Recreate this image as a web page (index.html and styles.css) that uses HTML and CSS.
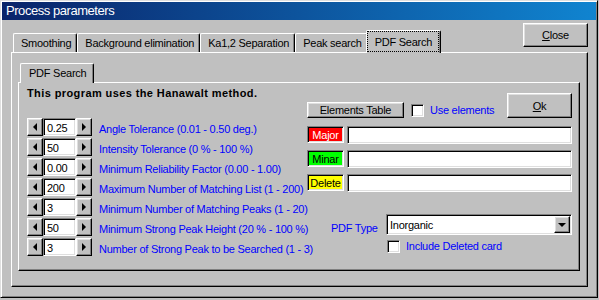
FILE: index.html
```html
<!DOCTYPE html>
<html lang="en">
<head>
    <meta charset="UTF-8">
    <title>Process parameters</title>
    <link rel="stylesheet" href="styles.css">
</head>
<body>
<div class="window">
    <div class="titlebar">Process parameters</div>

    <div class="top-row">
        <div class="tabs">
            <div class="tab">Smoothing</div>
            <div class="tab">Background elimination</div>
            <div class="tab">Ka1,2 Separation</div>
            <div class="tab">Peak search</div>
            <div class="tab selected focus">PDF Search</div>
        </div>
        <div class="btn close-btn"><span><u>C</u>lose</span></div>
    </div>

    <div class="panel outer">
        <div class="tabs inner-tabs">
            <div class="tab tab-inner">PDF Search</div>
        </div>
        <div class="panel inner">
            <div class="left-col">
                <div class="heading">This program uses the Hanawalt method.</div>
                <div class="param">
                    <div class="spin"><span class="btn spin-btn prev"></span><span class="sunken spin-val">0.25</span><span class="btn spin-btn next"></span></div>
                    <span class="param-label">Angle Tolerance (0.01 - 0.50 deg.)</span>
                </div>
                <div class="param">
                    <div class="spin"><span class="btn spin-btn prev"></span><span class="sunken spin-val">50</span><span class="btn spin-btn next"></span></div>
                    <span class="param-label">Intensity Tolerance (0 % - 100 %)</span>
                </div>
                <div class="param">
                    <div class="spin"><span class="btn spin-btn prev"></span><span class="sunken spin-val">0.00</span><span class="btn spin-btn next"></span></div>
                    <span class="param-label">Minimum Reliability Factor (0.00 - 1.00)</span>
                </div>
                <div class="param">
                    <div class="spin"><span class="btn spin-btn prev"></span><span class="sunken spin-val">200</span><span class="btn spin-btn next"></span></div>
                    <span class="param-label">Maximum Number of Matching List (1 - 200)</span>
                </div>
                <div class="param">
                    <div class="spin"><span class="btn spin-btn prev"></span><span class="sunken spin-val">3</span><span class="btn spin-btn next"></span></div>
                    <span class="param-label">Minimum Number of Matching Peaks (1 - 20)</span>
                </div>
                <div class="param">
                    <div class="spin"><span class="btn spin-btn prev"></span><span class="sunken spin-val">50</span><span class="btn spin-btn next"></span></div>
                    <span class="param-label">Minimum Strong Peak Height (20 % - 100 %)</span>
                </div>
                <div class="param">
                    <div class="spin"><span class="btn spin-btn prev"></span><span class="sunken spin-val">3</span><span class="btn spin-btn next"></span></div>
                    <span class="param-label">Number of Strong Peak to be Searched (1 - 3)</span>
                </div>
            </div>

            <div class="right-col">
                <div class="el-row">
                    <div class="btn el-btn">Elements Table</div>
                    <div class="checkbox">
                        <span class="sunken check"></span>
                        <span class="check-label">Use elements</span>
                    </div>
                    <div class="btn ok-btn"><span><u>O</u>k</span></div>
                </div>
                <div class="tag-row first">
                    <span class="sunken tag major">Major</span>
                    <span class="sunken field"></span>
                </div>
                <div class="tag-row">
                    <span class="sunken tag minor">Minar</span>
                    <span class="sunken field"></span>
                </div>
                <div class="tag-row">
                    <span class="sunken tag delete">Delete</span>
                    <span class="sunken field"></span>
                </div>
                <div class="pdf-row">
                    <span class="pdf-label">PDF Type</span>
                    <div class="sunken select">
                        <span>Inorganic</span>
                        <span class="btn drop-btn"></span>
                    </div>
                </div>
                <div class="checkbox del-row">
                    <span class="sunken check"></span>
                    <span class="check-label">Include Deleted card</span>
                </div>
            </div>
        </div>
    </div>
</div>
</body>
</html>
```

FILE: styles.css
```css
* {
    box-sizing: border-box;
}

body {
    margin: 0;
    background: #c0c0c0;
    font-family: "Liberation Sans", Arial, sans-serif;
    font-size: 11px;
    letter-spacing: -0.25px;
    color: #000;
}

/* --- window frame --- */
.window {
    width: 598px;
    height: 298px;
    padding: 1px;
    border: 1px solid;
    border-color: #dfdfdf #000 #000 #dfdfdf;
    box-shadow: inset 1px 1px #fff, inset -1px -1px #808080;
}

.titlebar {
    height: 18px;
    line-height: 18px;
    padding-left: 4px;
    color: #fff;
    font-size: 13px;
    letter-spacing: -0.45px;
    background: linear-gradient(to right, #0a246a, #1084d0);
}

/* --- 3D pieces --- */
.btn {
    display: flex;
    align-items: center;
    justify-content: center;
    background: #c0c0c0;
    border: 1px solid;
    border-color: #fff #000 #000 #fff;
    box-shadow: inset -1px -1px #808080, inset 1px 1px #dfdfdf;
}

.sunken {
    background: #fff;
    border: 1px solid;
    border-color: #808080 #fff #fff #808080;
    box-shadow: inset 1px 1px #000, inset -1px -1px #dfdfdf;
}

.panel {
    border: 1px solid;
    border-color: #fff #000 #000 #fff;
    box-shadow: inset -1px -1px #808080;
}

/* --- tabs --- */
.top-row {
    display: flex;
    justify-content: space-between;
    width: 577px;
    height: 32px;
    margin-left: 9px;
}

.tabs {
    display: flex;
    align-items: flex-end;
    padding-left: 2px;
}

.tab {
    height: 19px;
    padding: 1px 5px 0 7px;
    line-height: 17px;
    white-space: nowrap;
    background: #c0c0c0;
    border: 1px solid;
    border-bottom: none;
    border-color: #fff #000 #000 #fff;
    border-radius: 2px 2px 0 0;
    box-shadow: inset -1px 0 #808080;
}

.tab.selected {
    position: relative;
    z-index: 1;
    height: 23px;
    margin: 0 -2px -1px;
    padding: 3px 8px 0;
}

.tab.focus::after {
    content: '';
    position: absolute;
    top: 0;
    left: 0;
    right: 1px;
    bottom: 1px;
    border: 1px dotted #000;
}

.close-btn {
    width: 65px;
    height: 24px;
    margin-top: 3px;
}

.outer {
    width: 577px;
    height: 235px;
    margin-left: 9px;
    padding: 0 7px 15px 6px;
}

.inner-tabs {
    padding-top: 10px;
}

.tab-inner {
    position: relative;
    z-index: 1;
    height: 20px;
    margin-bottom: -1px;
    padding: 1px 7px 0 8px;
}

.inner {
    display: flex;
    justify-content: space-between;
    height: 189px;
    padding: 0 7px 0 8px;
}

/* --- left column: spinners --- */
.left-col {
    width: 280px;
}

.heading {
    padding-top: 4px;
    margin-bottom: 18px;
    line-height: 13px;
    font-weight: bold;
    letter-spacing: 0.4px;
}

.param {
    display: flex;
    height: 20px;
}

.spin {
    display: flex;
    height: 18px;
}

.spin-btn {
    width: 16px;
    height: 18px;
}

.spin-btn::before {
    content: '';
    border-style: solid;
    border-color: transparent;
}

.spin-btn.prev::before {
    border-width: 4px 4px 4px 0;
    border-right-color: #000;
}

.spin-btn.next::before {
    border-width: 4px 0 4px 4px;
    border-left-color: #000;
}

.spin-val {
    width: 33px;
    height: 18px;
    padding: 2px 0 0 3px;
    line-height: 15px;
}

.param-label {
    margin-left: 7px;
    line-height: 22px;
    color: #00f;
    white-space: nowrap;
}

/* --- right column --- */
.right-col {
    width: 265px;
    padding-top: 10px;
}

.el-row {
    display: flex;
    align-items: flex-end;
    height: 25px;
}

.el-btn {
    width: 97px;
    height: 16px;
}

.checkbox {
    display: flex;
    align-items: center;
}

.el-row .checkbox {
    margin: 0 0 1px 7px;
}

.check {
    width: 13px;
    height: 13px;
}

.check-label {
    margin-left: 6px;
    line-height: 13px;
    color: #00f;
}

.ok-btn {
    width: 65px;
    height: 25px;
    margin-left: auto;
}

.tag-row {
    display: flex;
    gap: 3px;
    height: 18px;
    margin-top: 6px;
}

.tag-row.first {
    margin-top: 8px;
}

.tag {
    display: flex;
    align-items: center;
    justify-content: center;
    width: 37px;
    height: 17px;
}

.major { background: #f00; color: #fff; }
.minor { background: #0f0; }
.delete { background: #ff0; }

.field {
    flex: 1;
}

.pdf-row {
    display: flex;
    height: 21px;
    margin-top: 22px;
    padding-left: 24px;
}

.pdf-label {
    width: 55px;
    padding-top: 8px;
    line-height: 13px;
    color: #00f;
}

.select {
    display: flex;
    align-items: center;
    width: 186px;
    height: 21px;
    padding: 1px 1px 1px 3px;
}

.drop-btn {
    width: 16px;
    height: 17px;
    margin-left: auto;
}

.drop-btn::before {
    content: '';
    border-style: solid;
    border-width: 4px 4px 0;
    border-color: #000 transparent transparent;
}

.del-row {
    margin-top: 5px;
    padding-left: 80px;
}
```
